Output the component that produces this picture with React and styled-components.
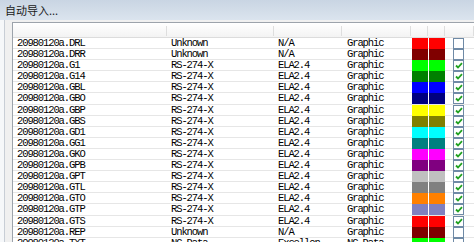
import styled, { createGlobalStyle } from "styled-components";

const GlobalStyle = createGlobalStyle`
  html, body {
    margin: 0;
    padding: 0;
    background: #f0f0f0;
  }
  body {
    width: 474px;
    height: 242px;
    overflow: hidden;
  }
`;

const rows = [
  ["20980120a.DRL", "Unknown", "N/A", "Graphic", "#ff0000", false],
  ["20980120a.DRR", "Unknown", "N/A", "Graphic", "#800000", false],
  ["20980120a.G1", "RS-274-X", "ELA2.4", "Graphic", "#00ff00", true],
  ["20980120a.G14", "RS-274-X", "ELA2.4", "Graphic", "#008000", true],
  ["20980120a.GBL", "RS-274-X", "ELA2.4", "Graphic", "#0000ff", true],
  ["20980120a.GBO", "RS-274-X", "ELA2.4", "Graphic", "#000080", true],
  ["20980120a.GBP", "RS-274-X", "ELA2.4", "Graphic", "#ffff00", true],
  ["20980120a.GBS", "RS-274-X", "ELA2.4", "Graphic", "#808000", true],
  ["20980120a.GD1", "RS-274-X", "ELA2.4", "Graphic", "#00ffff", true],
  ["20980120a.GG1", "RS-274-X", "ELA2.4", "Graphic", "#008080", true],
  ["20980120a.GKO", "RS-274-X", "ELA2.4", "Graphic", "#ff00ff", true],
  ["20980120a.GPB", "RS-274-X", "ELA2.4", "Graphic", "#800080", true],
  ["20980120a.GPT", "RS-274-X", "ELA2.4", "Graphic", "#c0c0c0", true],
  ["20980120a.GTL", "RS-274-X", "ELA2.4", "Graphic", "#808080", true],
  ["20980120a.GTO", "RS-274-X", "ELA2.4", "Graphic", "#ff8000", true],
  ["20980120a.GTP", "RS-274-X", "ELA2.4", "Graphic", "#8080c0", true],
  ["20980120a.GTS", "RS-274-X", "ELA2.4", "Graphic", "#ff0000", true],
  ["20980120a.REP", "Unknown", "N/A", "Graphic", "#800000", false],
  ["20980120a.TXT", "NC Data", "Excellon", "NC Data", "#00ff00", false],
];

const cols = "154px 107px 68px 69px 17px 17px 1fr";

const App = () => {
  return (
    <Window>
      <GlobalStyle />
      <TitleBar>自动导入...</TitleBar>
      <Body>
        <List>
          <Header>
            {[0, 1, 2, 3, 4, 5, 6].map((i) => (
              <HeadCell key={i} />
            ))}
          </Header>
          {rows.map(([name, format, ver, type, color, on]) => (
            <Row key={name}>
              <Cell>{name}</Cell>
              <Cell>{format}</Cell>
              <Cell>{ver}</Cell>
              <Cell $wide>{type}</Cell>
              <Swatch $color={color} />
              <Swatch $color={color} />
              <CheckCell>
                <Box>
                  {on && (
                    <svg width="8" height="7" viewBox="0 0 8 7">
                      <path
                        d="M1 3.5 L3 5.5 L7 1.2"
                        fill="none"
                        stroke="#21a121"
                        strokeWidth="1.8"
                      />
                    </svg>
                  )}
                </Box>
              </CheckCell>
            </Row>
          ))}
        </List>
      </Body>
    </Window>
  );
};

const Window = styled.div`
  width: 474px;
  height: 242px;
  display: flex;
  flex-direction: column;
  overflow: hidden;
  background: #f0f0f0;
`;

const TitleBar = styled.div`
  height: 20px;
  flex: none;
  box-sizing: border-box;
  padding: 3px 0 0 5px;
  background: linear-gradient(#c9d5e3, #dbe4ee);
  font-family: "Noto Sans CJK SC", sans-serif;
  font-size: 11px;
  line-height: 14px;
  color: #1a1a1a;
`;

const Body = styled.div`
  flex: 1;
  display: flex;
  padding: 2px 0 0 8px;
  border-left: 4px solid #f6f8fa;
  box-shadow: inset 1px 0 0 #c8ced6;
  min-height: 0;
`;

const List = styled.div`
  flex: 1;
  background: #fff;
  border-left: 1px solid #9ca3ab;
  border-top: 1px solid #9ca3ab;
  overflow: hidden;
`;

const Header = styled.div`
  display: grid;
  grid-template-columns: ${cols};
  height: 14px;
  background: linear-gradient(#ffffff, #f3f3f3);
  border-bottom: 1px solid #dcdcdc;
`;

const HeadCell = styled.div`
  border-right: 1px solid #dedede;
  margin: 3px 0 1px;
`;

const Row = styled.div`
  display: grid;
  grid-template-columns: ${cols};
  height: 11.1px;
  box-sizing: border-box;
  border-bottom: 1px solid #e6e6e6;
  font-family: "Liberation Mono", monospace;
  font-size: 10.5px;
  letter-spacing: -1.1px;
  line-height: 11px;
  color: #000;
`;

const Cell = styled.div`
  padding-left: ${(p) => (p.$wide ? "5px" : "4px")};
  white-space: nowrap;
  overflow: hidden;
`;

const Swatch = styled.div`
  background: ${(p) => p.$color};
  margin-left: 1px;
`;

const CheckCell = styled.div`
  padding-left: 8px;
  display: flex;
  align-items: center;
`;

const Box = styled.div`
  width: 9px;
  height: 9px;
  border: 1px solid #6f8aa6;
  background: #fff;
  display: flex;
  align-items: center;
  justify-content: center;
`;

export default App;
